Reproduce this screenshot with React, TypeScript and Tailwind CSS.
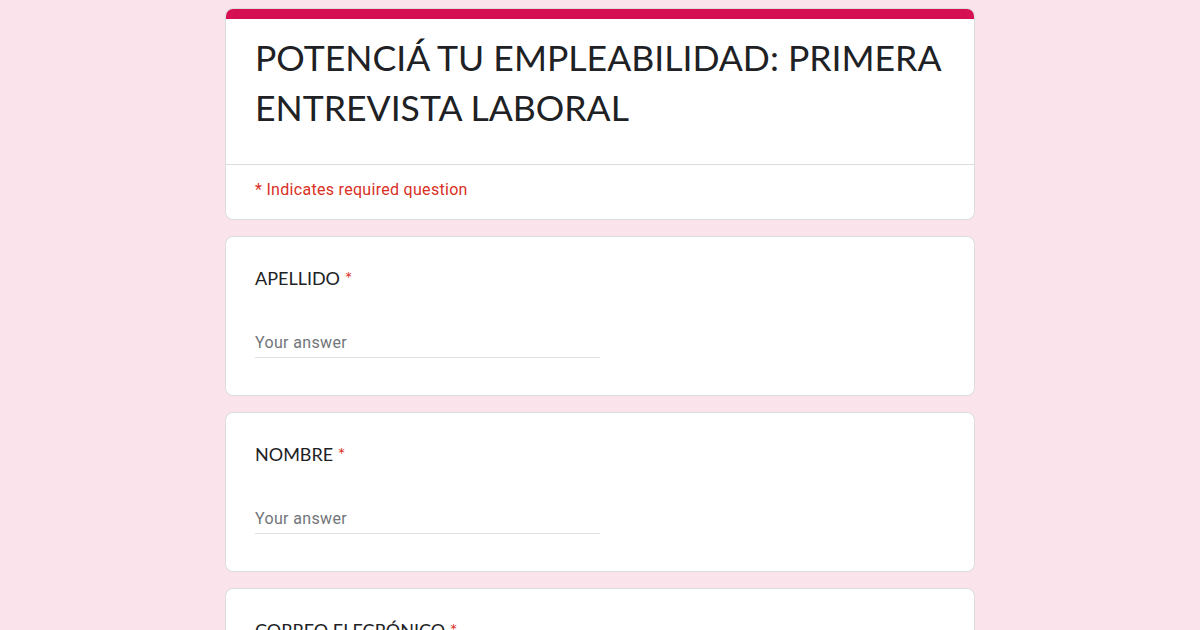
import React from "react";

function Question({ label }: { label: string }) {
  return (
    <div className="rounded-lg border border-[#dadce0] bg-white pl-[29px] pt-[29px] pb-[37px]">
      <div className="text-[18px] leading-[24px] text-[#202124]" style={{ fontFamily: "Lato, 'Open Sans', sans-serif" }}>
        {label} <span className="text-[#d93025]">*</span>
      </div>
      <div className="mt-[41px] w-[345px] h-[27px] border-b border-[#e0e0e0] text-[16px] leading-[24px] tracking-[0.35px] text-[#70757a]" style={{ fontFamily: "Roboto, 'Liberation Sans', sans-serif" }}>
        Your answer
      </div>
    </div>
  );
}

export default function App() {
  return (
    <div className="min-h-screen bg-[#fae3ea]">
      <div className="mx-auto w-[750px] pt-2 flex flex-col gap-4 pb-8">
        <div className="rounded-lg border border-[#dadce0] bg-white overflow-hidden">
          <div className="h-[11px] bg-[#d50f51] -mx-px -mt-px" />
          <div className="pl-[29px] pt-[14px] pb-[31px]">
            <h1 className="text-[35.6px] leading-[50px] font-normal text-[#202124]" style={{ fontFamily: "Lato, 'Open Sans', sans-serif" }}>
              POTENCIÁ TU EMPLEABILIDAD: PRIMERA ENTREVISTA LABORAL
            </h1>
          </div>
          <div className="border-t border-[#dadce0] pl-[29px] pt-[13px] pb-[17px]">
            <div className="text-[16px] leading-[24px] tracking-[0.3px] text-[#d93025]" style={{ fontFamily: "Roboto, 'Liberation Sans', sans-serif" }}>
              * Indicates required question
            </div>
          </div>
        </div>
        <Question label="APELLIDO" />
        <Question label="NOMBRE" />
        <Question label="CORREO ELECRÓNICO" />
      </div>
    </div>
  );
}
